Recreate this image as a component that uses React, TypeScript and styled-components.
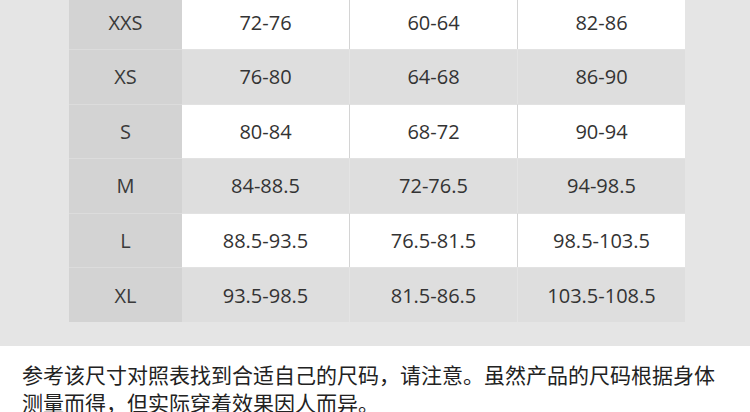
import styled, { createGlobalStyle } from "styled-components";

const GlobalStyle = createGlobalStyle`
  html, body {
    margin: 0;
    padding: 0;
    background: #ffffff;
  }
  body {
    width: 750px;
    height: 412px;
    overflow: hidden;
  }
`;

const rows = [
  ["XXS", "72-76", "60-64", "82-86"],
  ["XS", "76-80", "64-68", "86-90"],
  ["S", "80-84", "68-72", "90-94"],
  ["M", "84-88.5", "72-76.5", "94-98.5"],
  ["L", "88.5-93.5", "76.5-81.5", "98.5-103.5"],
  ["XL", "93.5-98.5", "81.5-86.5", "103.5-108.5"],
];

const Panel = styled.div`
  background: #e5e5e5;
  height: 346px;
  padding-left: 69px;
  overflow: hidden;
`;

const Table = styled.div`
  width: 616px;
  margin-top: -5.6px;
  display: grid;
  grid-template-columns: 113px 167px 168px 168px;
`;

const Row = styled.div<{ $shade: boolean }>`
  display: contents;
  --cell-bg: ${(p) => (p.$shade ? "#dedede" : "#ffffff")};
  --cell-line: ${(p) => (p.$shade ? "#e4e4e4" : "#d4d4d4")};
`;

const SizeCell = styled.div`
  height: 54.6px;
  display: flex;
  align-items: center;
  justify-content: center;
  background: #d3d3d3;
  border-top: 1px solid #dcdcdc;
  box-sizing: border-box;
  font-family: "Open Sans", "Noto Sans", sans-serif;
  font-size: 20px;
  color: #3a3a3a;
`;

const Cell = styled.div`
  height: 54.6px;
  display: flex;
  align-items: center;
  justify-content: center;
  background: var(--cell-bg);
  border-top: 1px solid #e2e2e2;
  box-sizing: border-box;
  font-family: "Open Sans", "Noto Sans", sans-serif;
  font-size: 20px;
  color: #333333;

  & + & {
    border-left: 1px solid var(--cell-line);
  }
`;

const Note = styled.p`
  margin: 0;
  padding: 14px 30px 0 22px;
  font-family: "Noto Sans CJK SC", "Noto Sans", sans-serif;
  font-size: 21px;
  line-height: 28px;
  color: #222222;
`;

export default function App() {
  return (
    <>
      <GlobalStyle />
      <Panel>
        <Table>
          {rows.map((r, i) => (
            <Row key={r[0]} $shade={i % 2 === 1}>
              <SizeCell>{r[0]}</SizeCell>
              <Cell>{r[1]}</Cell>
              <Cell>{r[2]}</Cell>
              <Cell>{r[3]}</Cell>
            </Row>
          ))}
        </Table>
      </Panel>
      <Note>
        参考该尺寸对照表找到合适自己的尺码，请注意。虽然产品的尺码根据身体测量而得，但实际穿着效果因人而异。
      </Note>
    </>
  );
}
